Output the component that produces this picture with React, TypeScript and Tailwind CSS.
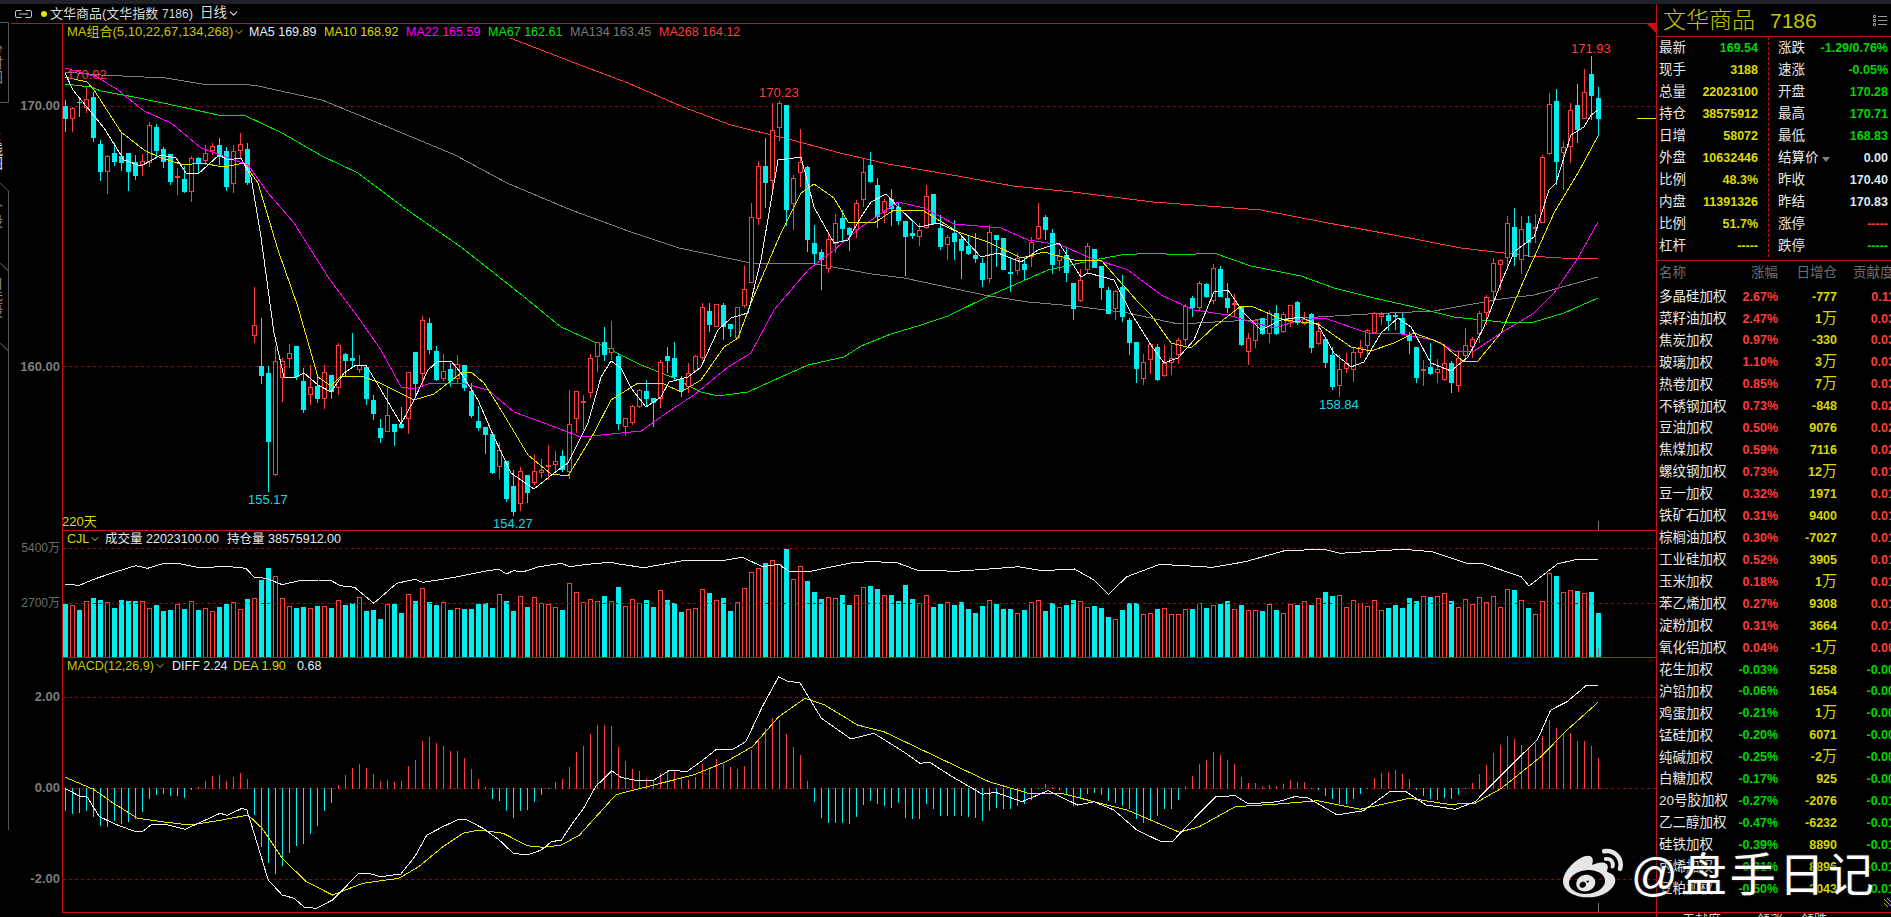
import { ChevronDown } from "lucide-react";
import { FaWeibo } from "react-icons/fa";

type Pt = [number, number];
// [colour, body top, body bottom, wick top, wick bottom], y in crop units (3 per px)
type Bar = ["c" | "r", number, number, number, number];

const CYAN = "#00eeee";
const RED = "#ff3c3c";

const barsA: Bar[] = [
  ["c",48,88,30,125],["r",55,88,50,125],["c",35,40,22,80],["r",28,53,-10,70],["c",20,143,5,155],
  ["c",162,245,150,272],["r",198,245,195,312],["c",188,216,160,228],["c",197,219,128,243],["c",189,245,189,302],
  ["c",216,258,195,270],["r",214,225,192,258],["r",105,220,96,232],["c",111,183,102,205],["c",177,215,172,235],
  ["c",192,275,192,285],["r",259,263,234,315],["c",267,305,228,310],["r",205,305,198,335],["c",205,222,200,250],
  ["r",190,213,166,225],["r",169,182,158,195],["c",165,200,143,225],["c",183,290,170,302],["r",184,281,165,308],
  ["r",163,184,128,208],["c",177,278,158,285],["r",706,737,590,758],["c",828,858,684,882],["c",849,1055,828,1205],
  ["r",813,1155,768,1157],["r",813,865,805,935],["r",790,806,762,835],["c",768,860,768,870],["c",873,960,835,968],
  ["r",892,914,826,945],["c",888,927,860,940],["r",847,926,826,957],["c",855,905,855,927],["r",766,895,760,915],
  ["c",792,812,788,858],["c",804,813,728,835],["r",826,841,795,848],["c",832,927,830,945],["c",930,972,915,990],
  ["c",1014,1044,987,1058],["r",976,1025,890,1025],["c",1002,1025,1002,1068],["c",1002,1014,950,1018],["r",847,988,847,1032],
  ["c",786,882,786,925],["r",691,853,678,890],["c",699,780,684,792],["c",783,870,768,873],["r",843,867,792,872],
  ["c",837,874,820,890],["r",823,866,795,883],
  ["c",825,893,825,902],["c",903,978,878,985],["c",993,1013,948,1022],["c",1011,1035,1011,1092],["c",1031,1150,1031,1152],
  ["r",1080,1130,1055,1167],["c",1113,1227,1113,1235],["c",1188,1265,1140,1278],["r",1144,1243,1132,1262],["c",1155,1209,1155,1240],
  ["r",1144,1178,1092,1185],["r",1140,1148,1108,1165],["r",1125,1130,1065,1170],["r",1113,1124,1082,1150],["c",1098,1140,1080,1145],
  ["r",1003,1145,900,1168],["r",904,986,904,1030],["r",934,938,915,1020],["r",805,910,792,925],["r",755,800,755,845],
  ["c",756,795,712,812],["r",775,790,692,810],["c",798,1002,790,1020],["r",985,1010,985,1037],["r",948,998,945,1005],
  ["r",900,950,898,955],["c",903,928,870,950],["c",925,940,925,1010],["r",817,928,810,953],["c",798,813,770,850],
  ["c",804,862,757,872],["c",868,902,858,920],["r",848,890,820,910],["r",798,842,795,845],["r",652,803,640,810],
  ["c",663,705,640,725],["r",643,710,643,712],["c",645,712,640,750],["c",702,717,702,740],["r",652,743,652,748],
  ["r",598,647,528,655],["r",382,578,340,580],["r",229,386,213,405],["c",228,278,145,355],["r",121,272,38,312],
  ["r",38,115,32,152],["c",45,360,45,408],["r",265,342,255,420],["r",216,250,118,292],["c",232,450,228,485],
  ["c",460,492,405,525],["c",485,510,478,600],["r",448,537,425,548],["r",400,462,372,490],["c",385,416,360,460],
  ["c",414,435,410,482],["r",340,420,330,445],
];

const barsB: Bar[] = [
  ["r",-24,60,-66,80],["c",-45,6,-84,8],["c",15,111,-6,144],["r",64,100,56,128],["c",57,87,27,137],
  ["c",80,123,68,135],["c",123,170,123,288],["c",159,167,120,177],["r",151,172,130,197],["r",49,143,15,146],
  ["c",42,133,42,135],["c",143,200,105,210],["r",172,196,165,240],["c",158,186,120,240],["c",176,213,170,297],
  ["c",197,222,165,225],["c",225,237,160,248],["c",249,300,235,320],["r",157,298,135,310],["c",166,179,166,262],
  ["c",174,270,174,270],["c",276,281,235,335],["r",235,274,218,285],["c",252,270,235,300],["r",185,232,170,260],
  ["r",139,176,70,180],["c",111,150,105,180],["c",159,255,148,282],["r",229,242,208,272],["c",225,278,205,305],
  ["c",309,386,309,420],["r",300,362,268,365],["r",199,270,190,282],["c",208,263,208,265],["c",258,323,258,360],
  ["c",330,401,322,402],["r",333,386,330,420],["c",320,410,285,425],["c",420,488,415,525],["c",485,567,485,608],
  ["r",547,596,522,615],["r",493,539,490,582],["c",502,600,492,602],["r",548,587,495,590],["r",535,550,495,585],
  ["r",481,524,475,553],["r",379,481,372,495],["c",354,384,348,410],["r",310,385,302,392],["c",312,350,310,355],
  ["r",265,364,252,372],["c",267,350,258,352],["c",354,385,308,400],["r",369,373,342,410],["c",380,495,380,498],
  ["r",475,515,460,555],["r",420,482,418,505],["c",415,462,415,465],["r",400,463,390,490],["c",400,462,375,465],
  ["r",403,456,395,458],["r",376,425,376,440],["c",366,430,362,435],["r",418,432,395,435],["c",403,503,400,520],
  ["r",454,492,425,495],["c",478,548,478,565],["c",526,620,500,630],["r",568,617,525,650],["r",550,566,520,580],
  ["r",517,571,505,605],["r",502,519,480,535],["r",451,499,448,525],["r",398,458,395,460],["r",402,412,395,435],
  ["c",405,423,398,452],["c",406,412,400,450],["c",415,462,398,465],["c",465,483,457,522],["c",501,593,501,608],
  ["r",568,572,540,618],["c",561,582,490,585],["r",568,578,537,610],["r",550,599,492,602],["c",550,609,543,638],
  ["r",533,617,510,635],["r",496,529,445,540],["r",478,500,470,535],["r",400,462,392,490],["r",352,398,345,435],
  ["r",250,335,235,372],["r",241,254,236,330],["r",130,233,108,270],["c",141,232,85,258],["r",148,239,108,282],
  ["c",129,189,108,230],["r",142,146,102,188],
];

const barsC: Bar[] = [
  ["r",412,608,405,610],["r",252,402,220,405],["c",243,426,208,495],["r",382,398,363,510],["r",271,380,250,430],
  ["c",255,330,192,370],["r",217,296,148,298],["c",162,228,108,300],["c",234,297,202,348],
];

// all candles in page pixels
const candles = [
  ...barsA.map((b) => toPx(b, 90)),
  ...barsB.map((b) => toPx(b, 180)),
  ...barsC.map((b) => toPx(b, 20)),
];

function toPx(b: Bar, base: number) {
  return {
    up: b[0] === "r",
    top: Math.round(base + b[1] / 3),
    bottom: Math.round(base + b[2] / 3),
    high: Math.round(base + b[3] / 3),
    low: Math.round(base + b[4] / 3),
  };
}

const barX = (i: number) => 64 + 7 * i;

const ma268: Pt[] = [[509,38],[574,63],[627,83],[682,107],[730,125],[791,140],[839,153],[887,164],[951,175],[1012,186],[1072,192],[1152,202],[1260,210],[1327,223],[1393,235],[1460,248],[1503,253],[1527,256],[1560,258],[1597,259]];
const ma134: Pt[] = [[64,72],[100,75],[165,78],[201,84],[241,84],[257,86],[321,100],[382,125],[454,155],[506,183],[570,210],[630,232],[678,248],[750,263],[815,264],[871,274],[903,278],[988,296],[1027,302],[1073,306],[1127,313],[1177,324],[1233,321],[1317,317],[1367,314],[1433,311],[1500,299],[1533,295],[1597,277]];
const ma67: Pt[] = [[64,84],[90,87],[100,91],[133,97],[181,107],[217,115],[245,116],[281,133],[321,156],[357,173],[402,207],[460,247],[493,273],[527,300],[560,327],[600,345],[640,365],[673,378],[700,392],[717,396],[747,392],[780,377],[807,365],[843,357],[860,346],[890,334],[920,325],[947,316],[990,295],[1047,270],[1093,260],[1120,255],[1153,253],[1177,255],[1213,253],[1250,266],[1300,276],[1333,288],[1373,298],[1413,307],[1453,317],[1500,322],[1533,322],[1563,313],[1597,298]];
const ma22: Pt[] = [[64,68],[96,77],[117,90],[143,111],[170,123],[200,148],[247,165],[267,193],[293,223],[327,277],[357,317],[380,350],[400,387],[413,389],[430,383],[460,383],[487,390],[513,412],[543,423],[580,437],[620,433],[640,431],[667,412],[693,395],[727,367],[750,353],[773,310],[807,270],[833,250],[860,227],[897,202],[923,208],[953,224],[1000,228],[1027,240],[1060,245],[1087,257],[1127,270],[1160,295],[1193,310],[1227,315],[1250,322],[1273,328],[1300,320],[1323,318],[1367,333],[1400,334],[1433,340],[1453,351],[1473,351],[1500,333],[1533,313],[1553,293],[1577,258],[1597,222]];
const ma10: Pt[] = [[64,77],[86,82],[93,90],[120,132],[143,150],[160,158],[183,165],[200,163],[223,167],[243,163],[257,183],[277,250],[297,307],[317,377],[330,386],[340,376],[360,376],[377,382],[413,400],[433,394],[460,373],[470,372],[483,383],[500,410],[527,455],[550,474],[567,476],[593,433],[610,400],[637,383],[663,384],[680,392],[700,380],[723,347],[737,338],[750,303],[767,263],[780,233],[800,193],[813,184],[833,198],[847,222],[873,223],[893,210],[923,211],[957,232],[987,242],[1020,258],[1043,252],[1073,260],[1100,260],[1137,302],[1150,315],[1170,343],[1190,348],[1213,327],[1240,306],[1250,306],[1283,320],[1317,324],[1350,347],[1370,351],[1393,343],[1413,333],[1440,343],[1463,362],[1477,361],[1500,333],[1523,280],[1553,213],[1577,173],[1597,136]];
const ma5: Pt[] = [[64,73],[72,90],[103,128],[123,160],[140,166],[160,155],[175,158],[185,173],[197,174],[218,155],[227,160],[240,158],[250,177],[260,237],[273,333],[283,377],[293,378],[303,373],[317,385],[330,392],[343,373],[355,365],[365,365],[380,390],[400,424],[413,400],[427,370],[437,361],[450,361],[460,373],[477,400],[493,437],[510,473],[533,489],[553,473],[567,463],[587,423],[600,377],[610,361],[620,368],[630,388],[645,407],[660,397],[668,382],[687,377],[700,367],[717,330],[730,318],[747,313],[760,260],[777,160],[793,158],[800,157],[813,207],[833,243],[847,240],[860,217],[870,202],[885,194],[897,207],[918,227],[937,223],[957,232],[980,257],[997,253],[1020,262],[1037,250],[1058,243],[1080,277],[1087,273],[1113,280],[1130,313],[1150,345],[1163,363],[1177,358],[1193,340],[1213,292],[1227,290],[1243,313],[1260,330],[1280,320],[1300,317],[1317,325],[1333,353],[1350,367],[1363,362],[1380,333],[1397,318],[1410,327],[1430,363],[1450,371],[1467,357],[1483,327],[1500,283],[1513,252],[1533,237],[1548,190],[1555,183],[1570,135],[1583,127],[1590,115],[1597,110]];

// crop units of the two lower zooms -> page pixels
const lo = (p: Pt[]): Pt[] => p.map(([x, y]) => [x / 2.489, 500 + y / 3]);
const hi = (p: Pt[]): Pt[] => p.map(([x, y]) => [620 + x / 1.522, 530 + y / 3]);

const holdLine: Pt[] = [
  ...lo([[160,253],[195,256],[235,236],[290,214],[335,197],[365,205],[400,192],[440,190],[490,202],[570,200],[610,205],[630,232],[660,235],[700,254],[750,240],[790,240],[820,241],[845,257],[880,262],[928,310],[985,250],[1030,238],[1050,247],[1130,232],[1210,212],[1240,208],[1258,222],[1275,212],[1300,215],[1340,200],[1395,190],[1415,200],[1460,193],[1515,187]]),
  ...hi([[0,103],[35,113],[100,90],[150,93],[185,82],[215,110],[240,103],[255,123],[285,125],[355,97],[385,95],[420,98],[450,120],[510,124],[560,117],[605,110],[640,122],[690,117],[720,150],[742,193],[770,140],[820,103],[900,112],[950,95],[1010,62],[1070,58],[1095,70],[1190,58],[1235,65],[1290,102],[1310,100],[1370,140],[1382,168],[1425,102],[1450,90],[1487,88]]),
];

const diffLine: Pt[] = [
  ...lo([[160,866],[195,888],[215,892],[245,950],[290,975],[335,995],[352,995],[375,973],[415,975],[458,988],[500,965],[545,940],[563,946],[600,925],[612,930],[630,1000],[665,1140],[700,1185],[730,1195],[755,1222],[785,1225],[825,1200],[850,1170],[890,1120],[915,1120],[945,1130],[995,1122],[1030,1070],[1060,1005],[1100,980],[1140,957],[1155,957],[1200,985],[1240,1020],[1275,1060],[1310,1065],[1345,1050],[1370,1025],[1395,1020],[1425,965],[1450,925],[1480,860],[1520,812]]),
  ...hi([[0,742],[20,750],[50,750],[75,720],[100,725],[125,690],[145,658],[170,658],[190,635],[215,530],[240,440],[255,455],[272,457],[305,565],[350,627],[385,610],[430,665],[455,700],[470,697],[500,735],[550,793],[570,787],[610,815],[650,782],[695,825],[720,815],[750,840],[785,900],[820,933],[840,933],[880,850],[905,800],[935,797],[955,822],[1000,815],[1025,800],[1045,803],[1090,855],[1130,842],[1170,785],[1195,785],[1225,825],[1270,838],[1300,815],[1340,735],[1395,628],[1415,540],[1440,515],[1470,465],[1487,468]]),
];

const deaLine: Pt[] = [
  ...lo([[160,832],[230,868],[280,910],[340,955],[400,965],[470,975],[540,962],[615,945],[650,985],[700,1075],[760,1145],[825,1185],[900,1150],[990,1135],[1040,1100],[1100,1040],[1150,1000],[1190,990],[1250,1000],[1310,1037],[1350,1042],[1395,1035],[1440,1005],[1500,925],[1530,885]]),
  ...hi([[0,790],[60,760],[110,735],[160,695],[200,650],[240,560],[280,505],[310,525],[360,585],[400,605],[480,680],[560,755],[620,790],[670,790],[720,815],[770,840],[850,907],[880,890],[935,830],[1000,822],[1060,812],[1125,838],[1200,805],[1260,823],[1300,820],[1340,775],[1400,680],[1440,600],[1487,517]]),
];

// top of each volume bar, page y = 500 + v / 3
const volTops = [
  312,316,330,304,294,300,307,323,300,303, 303,304,324,315,333,330,312,327,304,330,
  325,333,321,312,307,328,297,295,240,204, 229,295,319,324,321,325,318,318,324,301,
  315,309,292,333,330,357,312,312,339,283, 303,265,306,315,307,330,325,327,327,312,
  309,324,283,303,333,289,321,292,310,312, 322,330,250,277,307,298,304,288,304,261,
  ...[
    229,208,220,210,231,181,210,220,246,238, 235,178,189,210,204,243,217,175,127,115,
    99,91,103,57,148,109,153,186,207,202, 204,195,225,195,172,168,177,195,195,213,
    165,207,220,195,231,222,217,225,216,238, 249,228,211,222,238,237,249,240,217,211,
    243,219,230,225,210,213,231,228,235,261, 267,240,219,219,252,250,237,234,252,252,
    237,237,220,234,225,222,213,237,225,240, 240,243,222,240,250,222,225,214,225,205,
    187,198,196,232,211,220,229,211,240,234, 225,234,204,213,199,201,199,190,213,231,
    208,222,202,217,199,231,178,181,211,234, 252,214,130,138,187,181,184,190,187,249,
  ].map((v) => v + 90),
];

// end of each MACD bar, same units, zero line at 865
const macdEnds = [
  930,938,935,930,948,975,978,960,970,962, 955,932,893,882,878,885,885,890,868,862,
  843,828,825,843,832,820,838,942,1037,1085, 1118,1095,1055,1035,1028,998,975,930,905,855,
  825,805,792,803,822,842,840,846,843,798, 780,723,711,729,738,753,753,775,807,837,
  862,893,900,930,950,930,927,903,882,863, 846,837,801,756,738,702,675,675,678,741, 783,
  ...[
    717,722,745,750,730,720,722,745,750,740, 703,715,688,703,710,716,708,660,630,595,
    565,570,612,650,675,752,813,860,875,875, 875,878,857,822,810,820,825,830,815,860,
    865,865,820,835,855,855,855,855,858,860, 870,840,830,835,835,825,820,808,775,762,
    772,776,790,825,805,790,785,793,810,815, 825,835,865,875,865,855,835,835,808,768,
    738,702,690,666,675,690,702,740,758,760, 768,764,768,762,750,757,757,773,776,795,
    803,820,820,805,790,773,743,730,725,720, 733,747,776,795,805,808,800,805,792,773,
    758,733,705,670,645,618,628,645,650,640, 618,570,595,610,610,632,632,648,684,
  ].map((v) => v + 90),
];

const quotesLeft = [
  ["最新", "169.54", "text-[#00d800]"],
  ["现手", "3188", "text-[#dcdc00]"],
  ["总量", "22023100", "text-[#dcdc00]"],
  ["持仓", "38575912", "text-[#dcdc00]"],
  ["日增", "58072", "text-[#dcdc00]"],
  ["外盘", "10632446", "text-[#dcdc00]"],
  ["比例", "48.3%", "text-[#dcdc00]"],
  ["内盘", "11391326", "text-[#dcdc00]"],
  ["比例", "51.7%", "text-[#dcdc00]"],
  ["杠杆", "-----", "text-[#dcdc00]"],
];

const quotesRight = [
  ["涨跌", "-1.29/0.76%", "text-[#00d800]"],
  ["速涨", "-0.05%", "text-[#00d800]"],
  ["开盘", "170.28", "text-[#00d800]"],
  ["最高", "170.71", "text-[#00d800]"],
  ["最低", "168.83", "text-[#00d800]"],
  ["结算价", "0.00", "text-[#dfe8f5]"],
  ["昨收", "170.40", "text-[#dfe8f5]"],
  ["昨结", "170.83", "text-[#dfe8f5]"],
  ["涨停", "-----", "text-[#ff3c3c]"],
  ["跌停", "-----", "text-[#00d800]"],
];

const members = [
  ["多晶硅加权", "2.67%", "-777", "0.11"],
  ["菜籽油加权", "2.47%", "1万", "0.03"],
  ["焦炭加权", "0.97%", "-330", "0.03"],
  ["玻璃加权", "1.10%", "3万", "0.03"],
  ["热卷加权", "0.85%", "7万", "0.03"],
  ["不锈钢加权", "0.73%", "-848", "0.02"],
  ["豆油加权", "0.50%", "9076", "0.02"],
  ["焦煤加权", "0.59%", "7116", "0.02"],
  ["螺纹钢加权", "0.73%", "12万", "0.01"],
  ["豆一加权", "0.32%", "1971", "0.01"],
  ["铁矿石加权", "0.31%", "9400", "0.01"],
  ["棕榈油加权", "0.30%", "-7027", "0.01"],
  ["工业硅加权", "0.52%", "3905", "0.01"],
  ["玉米加权", "0.18%", "1万", "0.01"],
  ["苯乙烯加权", "0.27%", "9308", "0.01"],
  ["淀粉加权", "0.31%", "3664", "0.01"],
  ["氧化铝加权", "0.04%", "-1万", "0.00"],
  ["花生加权", "-0.03%", "5258", "-0.00"],
  ["沪铅加权", "-0.06%", "1654", "-0.00"],
  ["鸡蛋加权", "-0.21%", "1万", "-0.00"],
  ["锰硅加权", "-0.20%", "6071", "-0.00"],
  ["纯碱加权", "-0.25%", "-2万", "-0.00"],
  ["白糖加权", "-0.17%", "925", "-0.00"],
  ["20号胶加权", "-0.27%", "-2076", "-0.01"],
  ["乙二醇加权", "-0.47%", "-6232", "-0.01"],
  ["硅铁加权", "-0.39%", "8890", "-0.01"],
  ["丙烯加权", "-0.31%", "8896", "-0.01"],
  ["豆粕加权", "-0.50%", "-2043", "-0.01"],
];

function Line({ points, color }: { points: Pt[]; color: string }) {
  return (
    <polyline
      points={points.map(([x, y]) => `${x.toFixed(1)},${y.toFixed(1)}`).join(" ")}
      fill="none"
      stroke={color}
      strokeWidth={1}
      shapeRendering="crispEdges"
    />
  );
}

function Dash({ y }: { y: number }) {
  return <line x1={62} x2={1656} y1={y + 0.5} y2={y + 0.5} stroke="#a80000" strokeDasharray="3 3" shapeRendering="crispEdges" />;
}

function Label({ x, y, color, children }: { x: number; y: number; color: string; children: string }) {
  return (
    <text x={x} y={y + 5} fill={color} fontSize={13}>
      {children}
    </text>
  );
}

function Candles() {
  return (
    <>
      {candles.map((c, i) => {
        const x = barX(i);
        const color = c.up ? RED : CYAN;
        return (
          <g key={i}>
            <rect x={x} y={c.high} width={1} height={Math.max(c.low - c.high, 1)} fill={color} />
            {c.up ? (
              <rect x={x - 1.5} y={c.top + 0.5} width={4} height={Math.max(c.bottom - c.top - 1, 1)} fill="#000" stroke={color} strokeWidth={1} shapeRendering="crispEdges" />
            ) : (
              <rect x={x - 2} y={c.top} width={5} height={Math.max(c.bottom - c.top, 1)} fill={color} />
            )}
          </g>
        );
      })}
    </>
  );
}

function VolumeBars() {
  return (
    <>
      {volTops.map((v, i) => {
        const top = Math.round(500 + v / 3);
        const x = barX(i);
        return candles[i].up ? (
          <rect key={i} x={x - 1.5} y={top + 0.5} width={4} height={657 - top} fill="#000" stroke={RED} shapeRendering="crispEdges" />
        ) : (
          <rect key={i} x={x - 2} y={top} width={5} height={657 - top} fill={CYAN} />
        );
      })}
    </>
  );
}

function MacdBars() {
  return (
    <>
      {macdEnds.map((v, i) => {
        const end = Math.round(500 + v / 3);
        const up = end < 788;
        return <rect key={i} x={barX(i)} y={Math.min(end, 788)} width={1} height={Math.abs(end - 788) + 1} fill={up ? RED : CYAN} />;
      })}
    </>
  );
}

function Axis({ labels }: { labels: { text: string; top: string; dim?: boolean }[] }) {
  return (
    <div className="relative w-[51px] shrink-0">
      {labels.map((l) => (
        <span
          key={l.text}
          className={`absolute right-[2px] leading-[14px] ${l.top} ${l.dim ? "text-[12px] text-[#6e6e6e]" : "text-[13px] font-bold text-[#7d7d7d]"}`}
        >
          {l.text}
        </span>
      ))}
    </div>
  );
}

function Tabs() {
  return (
    <div className="relative w-[11px] shrink-0 overflow-hidden text-[14px] leading-[14px]">
      <svg width={11} height={913} viewBox="0 4 11 913" className="block">
        <polyline points="0,22.5 8.5,22.5 8.5,102.5 0,102.5" fill="none" stroke="#565656" />
        <polyline points="0,183 8.5,191 8.5,271 0,263 8.5,271 8.5,351 0,343 8.5,351 8.5,830 Q8.5,845 0,852" fill="none" stroke="#565656" />
      </svg>
      <span className="absolute left-[-12px] top-[38px] text-[#8a8a8a] [writing-mode:vertical-rl]">分时图</span>
      <span className="absolute left-[-12px] top-[128px] text-[#e8e8e8] [writing-mode:vertical-rl]">K线图</span>
      <span className="absolute left-[-12px] top-[196px] text-[#8a8a8a] [writing-mode:vertical-rl]">个股</span>
      <span className="absolute left-[-12px] top-[272px] text-[#8a8a8a] [writing-mode:vertical-rl]">自选股</span>
    </div>
  );
}

function Header() {
  return (
    <div className="flex h-[19px] shrink-0 items-center text-[#dcdcdc]">
      <svg width={17} height={8} viewBox="0 0 17 8" className="ml-[4px] shrink-0" fill="none" stroke="#c8c8c8">
        <path d="M6.5 .5H2A1.5 1.5 0 0 0 .5 2v4A1.5 1.5 0 0 0 2 7.5h4.5M10.5 .5H15A1.5 1.5 0 0 1 16.5 2v4A1.5 1.5 0 0 1 15 7.5h-4.5M4 4h9" />
      </svg>
      <span className="ml-[9px] h-[6px] w-[6px] shrink-0 rounded-full bg-[#e6e600]" />
      <span className="ml-[3px] w-[150px] shrink-0 whitespace-pre text-[13px]">
        文华商品(文华指数 <span className="text-[12px]">7186</span>)
      </span>
      <span className="text-[13.5px]">日线</span>
      <ChevronDown size={13} strokeWidth={2} className="shrink-0 text-[#dcdcdc]" />
    </div>
  );
}

function MainPanel() {
  return (
    <div className="flex h-[507px]">
      <Axis labels={[{ text: "170.00", top: "top-[75px]" }, { text: "160.00", top: "top-[336px]" }]} />
      <div className="relative flex-1 border-b border-l border-[#c81010]">
        <svg width={1594} height={506} viewBox="62 24 1594 506" className="absolute left-0 top-0">
          <Dash y={106} />
          <Dash y={366} />
          <Line points={ma268} color="#ff3c3c" />
          <Line points={ma134} color="#808080" />
          <Line points={ma67} color="#00e600" />
          <Candles />
          <Line points={ma22} color="#ff00ff" />
          <Line points={ma10} color="#e6e600" />
          <Line points={ma5} color="#f0f0f0" />
          <Label x={66} y={74} color="#ff3c3c">170.92</Label>
          <Label x={758} y={92} color="#ff3c3c">170.23</Label>
          <Label x={1570} y={48} color="#ff3c3c">171.93</Label>
          <Label x={247} y={499} color="#19d8e8">155.17</Label>
          <Label x={492} y={523} color="#19d8e8">154.27</Label>
          <Label x={1318} y={404} color="#19d8e8">158.84</Label>
          <Label x={61} y={521} color="#dcdc00">220天</Label>
          <polygon points="1646,24 1656,24 1656,34" fill="#c81010" />
          <rect x={1636} y={118} width={20} height={1} fill="#e6e600" />
          <rect x={1597} y={521} width={1} height={9} fill="#777" />
        </svg>
        <div className="absolute left-[4px] top-0 flex h-[16px] items-center whitespace-nowrap text-[12.5px]">
          <span className="flex w-[182px] items-center text-[13px] text-[#c8c800]">
            MA组合(5,10,22,67,134,268)
            <ChevronDown size={12} strokeWidth={2} className="shrink-0" />
          </span>
          <span className="w-[75px] text-[#e8eef8]">MA5 169.89</span>
          <span className="w-[82px] text-[#d8d800]">MA10 168.92</span>
          <span className="w-[82px] text-[#ff00ff]">MA22 165.59</span>
          <span className="w-[82px] text-[#00e600]">MA67 162.61</span>
          <span className="w-[89px] text-[#7a7a7a]">MA134 163.45</span>
          <span className="text-[#ff3c3c]">MA268 164.12</span>
        </div>
      </div>
    </div>
  );
}

function VolumePanel() {
  return (
    <div className="flex h-[127px]">
      <Axis labels={[{ text: "5400万", top: "top-[10px]", dim: true }, { text: "2700万", top: "top-[65px]", dim: true }]} />
      <div className="relative flex-1 border-b border-l border-[#c81010]">
        <svg width={1594} height={126} viewBox="62 531 1594 126" className="absolute left-0 top-0">
          <VolumeBars />
          <Dash y={548} />
          <Dash y={603} />
          <Line points={holdLine} color="#f0f0f0" />
          <rect x={1597} y={648} width={1} height={9} fill="#777" />
        </svg>
        <div className="absolute left-[4px] top-0 flex h-[16px] items-center whitespace-nowrap text-[12.5px] text-[#e8e8e8]">
          <span className="flex w-[38px] items-center text-[#d8d800]">
            CJL
            <ChevronDown size={12} strokeWidth={2} className="shrink-0" />
          </span>
          <span className="w-[122px]">成交量 22023100.00</span>
          <span>持仓量 38575912.00</span>
        </div>
      </div>
    </div>
  );
}

function MacdPanel() {
  return (
    <div className="flex h-[255px]">
      <Axis
        labels={[
          { text: "2.00", top: "top-[32px]" },
          { text: "0.00", top: "top-[123px]" },
          { text: "-2.00", top: "top-[214px]" },
        ]}
      />
      <div className="relative flex-1 border-b border-l border-[#c81010]">
        <svg width={1594} height={254} viewBox="62 658 1594 254" className="absolute left-0 top-0">
          <Dash y={697} />
          <Dash y={788} />
          <Dash y={879} />
          <MacdBars />
          <Line points={deaLine} color="#e6e600" />
          <Line points={diffLine} color="#f0f0f0" />
          <rect x={1597} y={903} width={1} height={9} fill="#777" />
        </svg>
        <div className="absolute left-[4px] top-0 flex h-[16px] items-center whitespace-nowrap text-[12.5px] text-[#e8eef8]">
          <span className="flex w-[105px] items-center text-[#c8c800]">
            MACD(12,26,9)
            <ChevronDown size={12} strokeWidth={2} className="shrink-0" />
          </span>
          <span className="w-[61px]">DIFF 2.24</span>
          <span className="w-[64px] text-[#d8d800]">DEA 1.90</span>
          <span>0.68</span>
        </div>
      </div>
    </div>
  );
}

function QuoteColumn({ rows, className }: { rows: string[][]; className: string }) {
  return (
    <div className={className}>
      {rows.map(([label, value, color]) => (
        <div key={label + value} className="flex h-[22px] items-center justify-between">
          <span className="flex items-center text-[13.5px] text-[#e8e8e8]">
            {label}
            {label === "结算价" && <span className="ml-[3px] mt-[3px] h-0 w-0 border-x-[4px] border-t-[5px] border-x-transparent border-t-[#808080]" />}
          </span>
          <span className={`text-[12.5px] font-bold ${color}`}>{value}</span>
        </div>
      ))}
    </div>
  );
}

// 万 is drawn larger and thin in the reference
function Inflow({ value }: { value: string }) {
  if (!value.endsWith("万")) return <>{value}</>;
  return (
    <>
      {value.slice(0, -1)}
      <span className="text-[15px] font-normal leading-none">万</span>
    </>
  );
}

function SidePanel() {
  return (
    <aside className="relative flex w-[235px] shrink-0 flex-col overflow-hidden border-l border-[#c81010]">
      <div className="flex h-[33px] shrink-0 items-center justify-between border-b border-[#c81010] pl-[6px] pr-[4px] text-[#c4c400]">
        <span className="whitespace-pre text-[23px] font-light leading-none">
          文华商品<span className="ml-[15px] text-[21px]">7186</span>
        </span>
        <svg width={14} height={11} viewBox="0 0 14 11" fill="none" stroke="#9a9a9a">
          <path d="M.5 .5h2v2h-2zM.5 4.5h2v2h-2zM.5 8.5h2v2h-2zM5 1.5h9M5 5.5h9M5 9.5h9" />
        </svg>
      </div>

      <div className="flex h-[224px] shrink-0 border-b border-[#c81010]">
        <QuoteColumn rows={quotesLeft} className="h-[220px] w-[112px] shrink-0 border-r border-dashed border-[#c81010] pl-[2px] pr-[10px]" />
        <QuoteColumn rows={quotesRight} className="h-[220px] flex-1 pl-[9px] pr-[3px]" />
      </div>

      <div className="grid h-[25px] w-[238px] shrink-0 grid-cols-[72px_49px_59px_58px] items-center whitespace-nowrap text-[13.5px] text-[#6f6f6f]">
        <span className="pl-[2px]">名称</span>
        <span className="text-right">涨幅</span>
        <span className="text-right">日增仓</span>
        <span className="pl-[16px]">贡献度</span>
      </div>

      {members.map(([name, pct, inflow, share]) => {
        const tone = pct.startsWith("-") ? "text-[#00d800]" : "text-[#ff3c3c]";
        return (
          <div key={name} className="grid h-[21.94px] w-[238px] shrink-0 grid-cols-[72px_49px_59px_58px] items-center whitespace-nowrap text-right text-[12.5px] font-bold">
            <span className="pl-[2px] text-left text-[13.5px] font-normal text-[#e8e8e8]">{name}</span>
            <span className={tone}>{pct}</span>
            <span className="text-[#d8d800]">
              <Inflow value={inflow} />
            </span>
            <span className={tone}>{share}</span>
          </div>
        );
      })}

      <svg width={7} height={10} viewBox="0 0 7 10" className="absolute bottom-[10px] right-0" stroke="#c8c800" fill="none">
        <path d="M0 2l7 7M3 1l4 4M0 6l4 4" />
      </svg>

      <div className="absolute bottom-0 left-0 flex h-[5px] w-full overflow-hidden border-t border-[#c81010] text-[13px] leading-[16px] text-[#d8d8d8]">
        <span className="ml-[25px] mt-[-1px]">贡献度</span>
        <span className="ml-[36px] mt-[-1px]">领涨</span>
        <span className="ml-[18px] mt-[-1px]">领跌</span>
      </div>
    </aside>
  );
}

export default function App() {
  return (
    <div className="relative flex h-[917px] w-[1891px] flex-col overflow-hidden bg-black font-['Liberation_Sans','Noto_Sans_CJK_SC',sans-serif]">
      <div className="h-[4px] shrink-0 bg-[#1e2228]" />
      <div className="flex min-h-0 flex-1">
        <Tabs />
        <main className="flex w-[1645px] shrink-0 flex-col">
          <div className="border-b border-[#c81010]">
            <Header />
          </div>
          <MainPanel />
          <VolumePanel />
          <MacdPanel />
        </main>
        <SidePanel />
      </div>

      {/* weibo watermark */}
      <div className="pointer-events-none absolute left-[1563px] top-[845px] flex items-center text-white">
        <FaWeibo size={60} className="text-[#e6e6e6]" />
        <span className="ml-[8px] whitespace-nowrap text-[46px] leading-[56px] tracking-[3px] [text-shadow:0_0_3px_#222,0_0_3px_#222]">
          @盘手日记
        </span>
      </div>
    </div>
  );
}
